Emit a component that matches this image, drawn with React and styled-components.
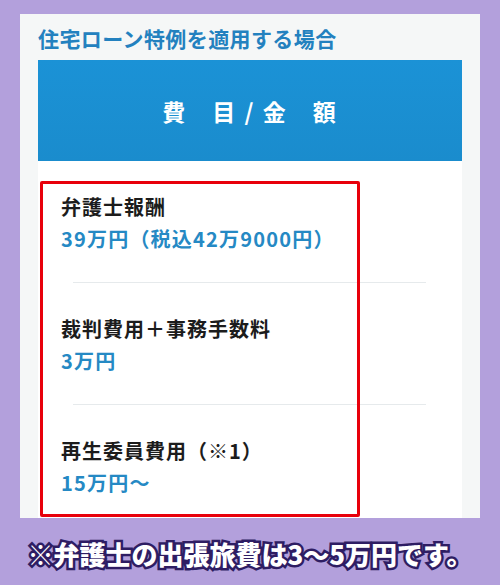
import * as React from 'react';
import styled, { createGlobalStyle } from 'styled-components';

const rows = [
  { label: '弁護士報酬', value: '39万円（税込42万9000円）' },
  { label: '裁判費用＋事務手数料', value: '3万円' },
  { label: '再生委員費用（※1）', value: '15万円〜' },
];

const App = () => {
  return (
    <Page>
      <GlobalStyle />
      <Card>
        <Title>住宅ローン特例を適用する場合</Title>
        <TableHead>費　目 / 金　額</TableHead>
        <TableBody>
          {rows.map((row, i) => (
            <Row key={row.label}>
              {i > 0 && <Divider />}
              <Label>{row.label}</Label>
              <Value>{row.value}</Value>
            </Row>
          ))}
          <Highlight />
        </TableBody>
      </Card>
      <Caption>※弁護士の出張旅費は3〜5万円です。</Caption>
    </Page>
  );
};

const GlobalStyle = createGlobalStyle`
  body {
    margin: 0;
    background: #b3a0dc;
    font-family: "Noto Sans CJK JP", "Noto Sans", sans-serif;
  }
`

const Page = styled.div`
  width: 500px;
  height: 585px;
  box-sizing: border-box;
  padding: 14px 20px 0 20px;
  display: flex;
  flex-direction: column;
  overflow: hidden;
`
const Card = styled.div`
  background: #f5f7f7;
  height: 504px;
  box-sizing: border-box;
  padding: 11px 18px 0 18px;
  display: flex;
  flex-direction: column;
`
const Title = styled.h2`
  margin: 0;
  height: 35px;
  font-size: 21px;
  font-weight: 700;
  line-height: 27px;
  letter-spacing: 0.4px;
  color: #2381bf;
`
const TableHead = styled.div`
  height: 101px;
  background: linear-gradient(180deg, #1b92d6 0%, #1a8ccd 100%);
  color: #ffffff;
  font-size: 23px;
  font-weight: 700;
  display: flex;
  align-items: center;
  justify-content: center;
  letter-spacing: 2px;
`
const TableBody = styled.div`
  position: relative;
  flex: 1;
  background: #ffffff;
  display: flex;
  flex-direction: column;
  padding-top: 30px;
`
const Row = styled.div`
  display: flex;
  flex-direction: column;
  padding-left: 23px;
`
const Divider = styled.div`
  height: 1px;
  background: #e6eaec;
  margin: 27px 36px 30px 12px;
`
const Label = styled.div`
  font-size: 20px;
  font-weight: 700;
  line-height: 32px;
  letter-spacing: 1px;
  color: #1c1c1c;
`
const Value = styled.div`
  font-size: 20px;
  font-weight: 700;
  line-height: 32px;
  letter-spacing: 1.2px;
  color: #2589c4;
`
const Highlight = styled.div`
  position: absolute;
  left: 2px;
  top: 20px;
  width: 320px;
  height: 336px;
  box-sizing: border-box;
  border: 3px solid #e8000b;
  border-radius: 2px;
  pointer-events: none;
`
const Caption = styled.div`
  margin-top: 19px;
  text-align: center;
  font-size: 26px;
  font-weight: 900;
  line-height: 34px;
  color: #ffffff;
  -webkit-text-stroke: 5px #2e1d63;
  paint-order: stroke fill;
  white-space: nowrap;
`

export default App;
